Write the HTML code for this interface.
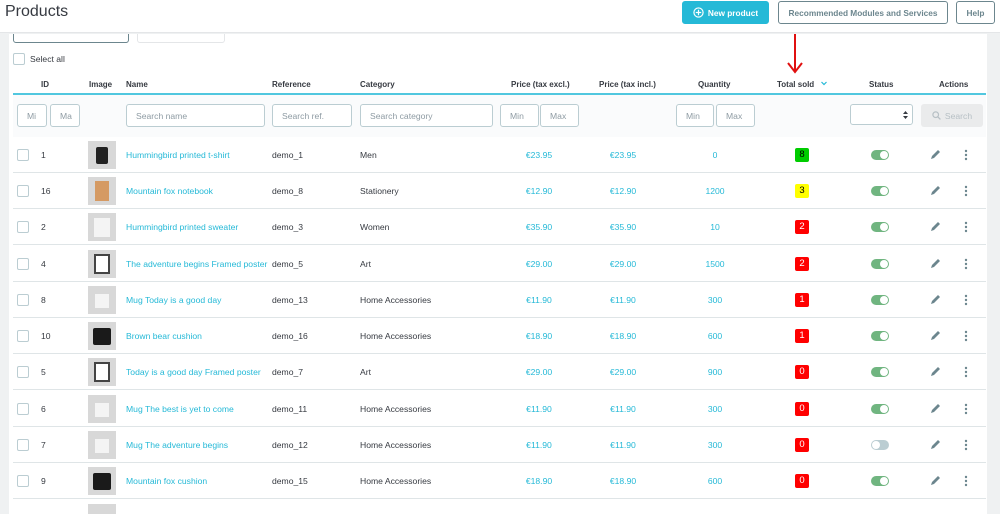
<!DOCTYPE html>
<html><head><meta charset="utf-8"><style>
*{box-sizing:border-box;margin:0;padding:0}
body{width:1000px;height:511px;overflow:hidden;background:#eff1f2;font-family:"Liberation Sans",sans-serif;font-size:8.6px;color:#363a41;position:relative}
.a{position:absolute}
#top{left:0;top:0;width:1000px;height:33px;background:#fff;border-bottom:1px solid #e4e6e8}
#card{left:9px;top:34px;width:978px;height:480px;background:#fff}
.btn{position:absolute;top:1px;height:23px;border:1px solid #6c868e;border-radius:3px;background:#fff;color:#6c868e;font-size:8.3px;font-weight:bold;display:flex;align-items:center;justify-content:center;white-space:nowrap}
.th{position:absolute;top:80px;font-weight:bold;font-size:8px;color:#363a41}
.inp{position:absolute;height:23px;border:1px solid #bbcdd2;border-radius:3px;background:#fff;color:#8e9ba3;font-size:8.6px;display:flex;align-items:center;padding-left:9px}
.row{position:absolute;left:13px;width:973px;height:36px;border-bottom:1px solid #dfe5e7}
.row div{position:absolute}
.cb{left:4px;top:12px;width:12px;height:12px;border:1px solid #bbcdd2;border-radius:2px;background:#fff}
.id{left:28px;top:13px}
.img{left:75px;top:4px;width:28px;height:28px;background:#d8d8d8}
.nm{left:113px;top:13px;color:#25b9d7}
.rf{left:259px;top:13px}
.ct{left:347px;top:13px}
.p1{left:496px;width:60px;text-align:center;top:13px;color:#25b9d7}
.p2{left:580px;width:60px;text-align:center;top:13px;color:#25b9d7}
.q{left:672px;width:60px;text-align:center;top:13px;color:#25b9d7}
.ts{left:782px;top:11px;width:14px;height:14px;border-radius:2px;text-align:center;line-height:14px;font-size:9.5px;color:#fff;background:#f00}
.tg{left:858px;top:13px;width:18px;height:10px;border-radius:5px;background:#70b580}
.tg:after{content:"";position:absolute;right:1px;top:1px;width:8px;height:8px;border-radius:50%;background:#fff}
.tg.off{background:#bbcdd2}.tg.off:after{right:auto;left:1px}
.ed{left:917px;top:12px}
.dt{left:951px;top:12px}
</style></head><body>
<div id="top" class="a">
 <div class="a" style="left:5px;top:3px;font-size:16px;color:#363a41">Products</div>
 <div class="btn" style="left:682px;width:87px;background:#25b9d7;border-color:#25b9d7;color:#fff"><svg width="11" height="11" viewBox="0 0 12 12" style="margin-right:4px"><circle cx="6" cy="6" r="5" fill="none" stroke="#fff" stroke-width="1.3"/><path d="M6 3v6M3 6h6" stroke="#fff" stroke-width="1.3"/></svg>New product</div>
 <div class="btn" style="left:778px;width:170px">Recommended Modules and Services</div>
 <div class="btn" style="left:956px;width:39px">Help</div>
</div>
<div id="card" class="a"></div>
<div class="a" style="left:13px;top:34px;width:116px;height:9px;border:1px solid #6c868e;border-top:none;border-radius:0 0 3px 3px;background:#fff"></div>
<div class="a" style="left:137px;top:34px;width:88px;height:9px;border:1px solid #e4e6e8;border-top:none;border-radius:0 0 3px 3px"></div>
<div class="a" style="left:13px;top:53px;width:12px;height:12px;border:1px solid #bbcdd2;border-radius:2px"></div>
<div class="a" style="left:30px;top:54px;font-size:8.6px">Select all</div>
<svg class="a" style="left:785px;top:33px" width="20" height="42"><path d="M10 1v38M3 30l7 9 7-9" stroke="#e01010" stroke-width="2" fill="none"/></svg>
<div class="th" style="left:41px">ID</div>
<div class="th" style="left:89px">Image</div>
<div class="th" style="left:126px">Name</div>
<div class="th" style="left:272px">Reference</div>
<div class="th" style="left:360px">Category</div>
<div class="th" style="left:511px">Price (tax excl.)</div>
<div class="th" style="left:599px">Price (tax incl.)</div>
<div class="th" style="left:698px">Quantity</div>
<div class="th" style="left:777px">Total sold</div>
<svg class="a" style="left:821px;top:81px" width="6" height="5"><path d="M0.5 1l2.5 2.5L5.5 1" stroke="#25b9d7" stroke-width="1.2" fill="none"/></svg>
<div class="th" style="left:869px">Status</div>
<div class="th" style="left:939px">Actions</div>
<div class="a" style="left:13px;top:93px;width:973px;height:2px;background:#25b9d7;opacity:.8"></div>
<div class="a" style="left:13px;top:95px;width:973px;height:42px;background:#fafbfc"></div>
<div class="inp" style="left:17px;top:104px;width:30px">Mi</div>
<div class="inp" style="left:50px;top:104px;width:30px">Ma</div>
<div class="inp" style="left:126px;top:104px;width:139px">Search name</div>
<div class="inp" style="left:272px;top:104px;width:80px">Search ref.</div>
<div class="inp" style="left:360px;top:104px;width:133px">Search category</div>
<div class="inp" style="left:500px;top:104px;width:39px">Min</div>
<div class="inp" style="left:540px;top:104px;width:39px">Max</div>
<div class="inp" style="left:676px;top:104px;width:38px">Min</div>
<div class="inp" style="left:716px;top:104px;width:39px">Max</div>
<div class="inp" style="left:850px;top:104px;width:63px;height:21px"><svg class="a" style="right:4px;top:6px" width="5" height="8"><path d="M0 3l2.5-3 2.5 3zM0 5l2.5 3 2.5-3z" fill="#363a41"/></svg></div>
<div class="a" style="left:921px;top:104px;width:62px;height:23px;background:#eaebec;border-radius:3px;color:#b7c0c5;font-size:8.6px;display:flex;align-items:center;justify-content:center"><svg width="9" height="9" style="margin-right:4px"><circle cx="3.7" cy="3.7" r="2.8" fill="none" stroke="#b7c0c5" stroke-width="1.2"/><path d="M5.8 5.8l2.6 2.6" stroke="#b7c0c5" stroke-width="1.3"/></svg>Search</div>

<div class="row" style="top:137px"><div class="cb"></div><div class="id">1</div><div class="img"><div style="left:8px;top:6px;width:12px;height:17px;background:#222;border-radius:2px"></div></div><div class="nm">Hummingbird printed t-shirt</div><div class="rf">demo_1</div><div class="ct">Men</div><div class="p1">€23.95</div><div class="p2">€23.95</div><div class="q">0</div><div class="ts" style="background:#0c0;color:#000">8</div><div class="tg"></div><div class="ed"><svg width="11" height="11"><path d="M1 10l1-3 6-6 2 2-6 6z" fill="#6c868e"/></svg></div><div class="dt"><svg width="4" height="12"><circle cx="2" cy="2" r="1.2" fill="#6c868e"/><circle cx="2" cy="6" r="1.2" fill="#6c868e"/><circle cx="2" cy="10" r="1.2" fill="#6c868e"/></svg></div></div>
<div class="row" style="top:173px"><div class="cb"></div><div class="id">16</div><div class="img"><div style="left:7px;top:4px;width:14px;height:20px;background:#d59a63"></div></div><div class="nm">Mountain fox notebook</div><div class="rf">demo_8</div><div class="ct">Stationery</div><div class="p1">€12.90</div><div class="p2">€12.90</div><div class="q">1200</div><div class="ts" style="background:#ff0;color:#000">3</div><div class="tg"></div><div class="ed"><svg width="11" height="11"><path d="M1 10l1-3 6-6 2 2-6 6z" fill="#6c868e"/></svg></div><div class="dt"><svg width="4" height="12"><circle cx="2" cy="2" r="1.2" fill="#6c868e"/><circle cx="2" cy="6" r="1.2" fill="#6c868e"/><circle cx="2" cy="10" r="1.2" fill="#6c868e"/></svg></div></div>
<div class="row" style="top:209px"><div class="cb"></div><div class="id">2</div><div class="img"><div style="left:6px;top:5px;width:16px;height:19px;background:#f4f4f4"></div></div><div class="nm">Hummingbird printed sweater</div><div class="rf">demo_3</div><div class="ct">Women</div><div class="p1">€35.90</div><div class="p2">€35.90</div><div class="q">10</div><div class="ts">2</div><div class="tg"></div><div class="ed"><svg width="11" height="11"><path d="M1 10l1-3 6-6 2 2-6 6z" fill="#6c868e"/></svg></div><div class="dt"><svg width="4" height="12"><circle cx="2" cy="2" r="1.2" fill="#6c868e"/><circle cx="2" cy="6" r="1.2" fill="#6c868e"/><circle cx="2" cy="10" r="1.2" fill="#6c868e"/></svg></div></div>
<div class="row" style="top:246px"><div class="cb"></div><div class="id">4</div><div class="img"><div style="left:6px;top:4px;width:16px;height:20px;border:2px solid #444;background:#fff"></div></div><div class="nm">The adventure begins Framed poster</div><div class="rf">demo_5</div><div class="ct">Art</div><div class="p1">€29.00</div><div class="p2">€29.00</div><div class="q">1500</div><div class="ts">2</div><div class="tg"></div><div class="ed"><svg width="11" height="11"><path d="M1 10l1-3 6-6 2 2-6 6z" fill="#6c868e"/></svg></div><div class="dt"><svg width="4" height="12"><circle cx="2" cy="2" r="1.2" fill="#6c868e"/><circle cx="2" cy="6" r="1.2" fill="#6c868e"/><circle cx="2" cy="10" r="1.2" fill="#6c868e"/></svg></div></div>
<div class="row" style="top:282px"><div class="cb"></div><div class="id">8</div><div class="img"><div style="left:7px;top:8px;width:14px;height:14px;background:#f4f4f4"></div></div><div class="nm">Mug Today is a good day</div><div class="rf">demo_13</div><div class="ct">Home Accessories</div><div class="p1">€11.90</div><div class="p2">€11.90</div><div class="q">300</div><div class="ts">1</div><div class="tg"></div><div class="ed"><svg width="11" height="11"><path d="M1 10l1-3 6-6 2 2-6 6z" fill="#6c868e"/></svg></div><div class="dt"><svg width="4" height="12"><circle cx="2" cy="2" r="1.2" fill="#6c868e"/><circle cx="2" cy="6" r="1.2" fill="#6c868e"/><circle cx="2" cy="10" r="1.2" fill="#6c868e"/></svg></div></div>
<div class="row" style="top:318px"><div class="cb"></div><div class="id">10</div><div class="img"><div style="left:5px;top:6px;width:18px;height:17px;background:#1a1a1a;border-radius:2px"></div></div><div class="nm">Brown bear cushion</div><div class="rf">demo_16</div><div class="ct">Home Accessories</div><div class="p1">€18.90</div><div class="p2">€18.90</div><div class="q">600</div><div class="ts">1</div><div class="tg"></div><div class="ed"><svg width="11" height="11"><path d="M1 10l1-3 6-6 2 2-6 6z" fill="#6c868e"/></svg></div><div class="dt"><svg width="4" height="12"><circle cx="2" cy="2" r="1.2" fill="#6c868e"/><circle cx="2" cy="6" r="1.2" fill="#6c868e"/><circle cx="2" cy="10" r="1.2" fill="#6c868e"/></svg></div></div>
<div class="row" style="top:354px"><div class="cb"></div><div class="id">5</div><div class="img"><div style="left:6px;top:4px;width:16px;height:20px;border:2px solid #444;background:#fff"></div></div><div class="nm">Today is a good day Framed poster</div><div class="rf">demo_7</div><div class="ct">Art</div><div class="p1">€29.00</div><div class="p2">€29.00</div><div class="q">900</div><div class="ts">0</div><div class="tg"></div><div class="ed"><svg width="11" height="11"><path d="M1 10l1-3 6-6 2 2-6 6z" fill="#6c868e"/></svg></div><div class="dt"><svg width="4" height="12"><circle cx="2" cy="2" r="1.2" fill="#6c868e"/><circle cx="2" cy="6" r="1.2" fill="#6c868e"/><circle cx="2" cy="10" r="1.2" fill="#6c868e"/></svg></div></div>
<div class="row" style="top:391px"><div class="cb"></div><div class="id">6</div><div class="img"><div style="left:7px;top:8px;width:14px;height:14px;background:#f4f4f4"></div></div><div class="nm">Mug The best is yet to come</div><div class="rf">demo_11</div><div class="ct">Home Accessories</div><div class="p1">€11.90</div><div class="p2">€11.90</div><div class="q">300</div><div class="ts">0</div><div class="tg"></div><div class="ed"><svg width="11" height="11"><path d="M1 10l1-3 6-6 2 2-6 6z" fill="#6c868e"/></svg></div><div class="dt"><svg width="4" height="12"><circle cx="2" cy="2" r="1.2" fill="#6c868e"/><circle cx="2" cy="6" r="1.2" fill="#6c868e"/><circle cx="2" cy="10" r="1.2" fill="#6c868e"/></svg></div></div>
<div class="row" style="top:427px"><div class="cb"></div><div class="id">7</div><div class="img"><div style="left:7px;top:8px;width:14px;height:14px;background:#f4f4f4"></div></div><div class="nm">Mug The adventure begins</div><div class="rf">demo_12</div><div class="ct">Home Accessories</div><div class="p1">€11.90</div><div class="p2">€11.90</div><div class="q">300</div><div class="ts">0</div><div class="tg off"></div><div class="ed"><svg width="11" height="11"><path d="M1 10l1-3 6-6 2 2-6 6z" fill="#6c868e"/></svg></div><div class="dt"><svg width="4" height="12"><circle cx="2" cy="2" r="1.2" fill="#6c868e"/><circle cx="2" cy="6" r="1.2" fill="#6c868e"/><circle cx="2" cy="10" r="1.2" fill="#6c868e"/></svg></div></div>
<div class="row" style="top:463px"><div class="cb"></div><div class="id">9</div><div class="img"><div style="left:5px;top:6px;width:18px;height:17px;background:#1a1a1a;border-radius:2px"></div></div><div class="nm">Mountain fox cushion</div><div class="rf">demo_15</div><div class="ct">Home Accessories</div><div class="p1">€18.90</div><div class="p2">€18.90</div><div class="q">600</div><div class="ts">0</div><div class="tg"></div><div class="ed"><svg width="11" height="11"><path d="M1 10l1-3 6-6 2 2-6 6z" fill="#6c868e"/></svg></div><div class="dt"><svg width="4" height="12"><circle cx="2" cy="2" r="1.2" fill="#6c868e"/><circle cx="2" cy="6" r="1.2" fill="#6c868e"/><circle cx="2" cy="10" r="1.2" fill="#6c868e"/></svg></div></div>
<div class="a" style="left:88px;top:504px;width:28px;height:10px;background:#d8d8d8"></div>
</body></html>
